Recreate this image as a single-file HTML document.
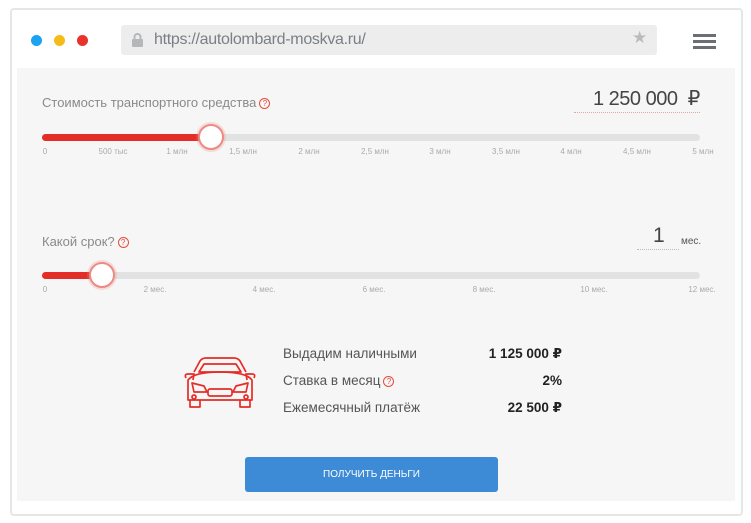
<!DOCTYPE html>
<html><head><meta charset="utf-8"><style>
*{margin:0;padding:0;box-sizing:border-box}
body{width:751px;height:523px;background:#fff;position:relative;font-family:"Liberation Sans","DejaVu Sans",sans-serif;overflow:hidden}
.a{position:absolute}
.frame{left:10px;top:8px;width:733px;height:508px;border:2px solid #e6e6e6;border-radius:4px;background:#fff}
.content{left:17px;top:68px;width:718px;height:433px;background:#f6f6f6}
.dot{width:11px;height:11px;border-radius:50%;top:35px}
.url{left:121px;top:25px;width:536px;height:30px;background:#ededee;border-radius:3px;color:#7a7f84;font-size:16px;line-height:30px;padding-left:33px;letter-spacing:-0.3px}
.bar{left:693px;width:23px;height:3px;background:#6b6f73}
.lbl{color:#8a8a8a;font-size:13px}
.q{display:inline-block;width:11px;height:11px;border:1px solid #e74c3c;border-radius:50%;color:#e74c3c;font-size:8px;line-height:9px;text-align:center;vertical-align:middle;margin-left:3px}
.track{height:7px;border-radius:4px;background:#e2e2e2}
.fill{height:7px;border-radius:4px;background:#e52d27}
.thumb{width:26px;height:26px;border-radius:50%;background:#fff;border:2px solid #ec8a85;box-shadow:0 0 0 2px rgba(236,138,133,.25)}
.tk{font-size:8px;color:#aaa;top:0;transform:translateX(-50%);white-space:nowrap}
.row{font-size:13.5px;color:#555}
.val{font-size:13.5px;color:#222;font-weight:bold;text-align:right;width:100px}
</style></head><body>
<div class="a frame"></div>
<div class="a dot" style="left:31px;background:#1aa3f0"></div>
<div class="a dot" style="left:54px;background:#f7bb18"></div>
<div class="a dot" style="left:77px;background:#e8332b"></div>
<div class="a url">https://autolombard-moskva.ru/</div>
<svg class="a" style="left:131px;top:32px" width="13" height="16" viewBox="0 0 13 16"><rect x="1" y="7" width="11" height="8" rx="1" fill="#b5b8bb"/><path d="M3.5 7V5a3 3 0 0 1 6 0v2" stroke="#b5b8bb" stroke-width="2" fill="none"/></svg>
<div class="a" style="left:632px;top:28px;color:#b9bcbf;font-size:17px">★</div>
<div class="a bar" style="top:34px"></div><div class="a bar" style="top:40px"></div><div class="a bar" style="top:46px"></div>
<div class="a content"></div>

<div class="a lbl" style="left:42px;top:95px">Стоимость транспортного средства<span class="q">?</span></div>
<div class="a" style="left:593px;top:86px;font-size:20px;color:#444;letter-spacing:-0.5px">1 250 000&nbsp;&nbsp;₽</div>
<div class="a" style="left:574px;top:112px;width:126px;border-top:1px dotted #e3a5a0"></div>
<div class="a track" style="left:42px;top:134px;width:658px"></div>
<div class="a fill" style="left:42px;top:134px;width:170px"></div>
<div class="a thumb" style="left:198px;top:124px"></div>
<div class="a" style="left:0;top:147px;width:751px;height:12px">
<span class="a tk" style="left:45px">0</span><span class="a tk" style="left:113px">500 тыс</span><span class="a tk" style="left:177px">1 млн</span><span class="a tk" style="left:243px">1,5 млн</span><span class="a tk" style="left:309px">2 млн</span><span class="a tk" style="left:375px">2,5 млн</span><span class="a tk" style="left:440px">3 млн</span><span class="a tk" style="left:506px">3,5 млн</span><span class="a tk" style="left:571px">4 млн</span><span class="a tk" style="left:637px">4,5 млн</span><span class="a tk" style="left:703px">5 млн</span></div>

<div class="a lbl" style="left:42px;top:234px">Какой срок?<span class="q">?</span></div>
<div class="a" style="left:653px;top:224px;font-size:21px;color:#444">1</div>
<div class="a" style="left:681px;top:236px;font-size:10px;color:#555">мес.</div>
<div class="a" style="left:637px;top:249px;width:42px;border-top:1px dotted #bbb"></div>
<div class="a track" style="left:42px;top:272px;width:658px"></div>
<div class="a fill" style="left:42px;top:272px;width:62px"></div>
<div class="a thumb" style="left:89px;top:262px"></div>
<div class="a" style="left:0;top:285px;width:751px;height:12px">
<span class="a tk" style="left:45px">0</span><span class="a tk" style="left:155px">2 мес.</span><span class="a tk" style="left:264px">4 мес.</span><span class="a tk" style="left:374px">6 мес.</span><span class="a tk" style="left:484px">8 мес.</span><span class="a tk" style="left:594px">10 мес.</span><span class="a tk" style="left:702px">12 мес.</span></div>

<svg class="a" style="left:180px;top:356px" width="80" height="54" viewBox="0 0 80 54" fill="none" stroke="#e52d27" stroke-width="1.7" stroke-linejoin="round">
<path d="M14 16 L20 5 Q22 2 26 2 H54 Q58 2 60 5 L66 16"/>
<path d="M19 16 L24 8 H56 L61 16 Z"/>
<path d="M6 22 Q4 18 8 18 H14 L13 24"/><path d="M74 22 Q76 18 72 18 H66 L67 24"/>
<path d="M8 24 Q14 16 40 16 Q66 16 72 24 V44 H8 Z"/>
<path d="M10 44 V51 H20 V44"/><path d="M60 44 V51 H70 V44"/>
<path d="M12 27 L24 30 L27 36 H14 Z"/><path d="M68 27 L56 30 L53 36 H66 Z"/>
<rect x="28" y="33" width="24" height="7" rx="2"/>
<circle cx="14" cy="41" r="2"/><circle cx="66" cy="41" r="2"/>
</svg>
<div class="a row" style="left:283px;top:346px">Выдадим наличными</div>
<div class="a row" style="left:283px;top:373px">Ставка в месяц<span class="q">?</span></div>
<div class="a row" style="left:283px;top:400px">Ежемесячный платёж</div>
<div class="a val" style="left:462px;top:346px">1 125 000 ₽</div>
<div class="a val" style="left:462px;top:373px">2%</div>
<div class="a val" style="left:462px;top:400px">22 500 ₽</div>

<div class="a" style="left:245px;top:457px;width:253px;height:35px;background:#3d8ad6;border-radius:3px;color:#fff;font-size:10px;line-height:35px;text-align:center">ПОЛУЧИТЬ ДЕНЬГИ</div>
</body></html>
